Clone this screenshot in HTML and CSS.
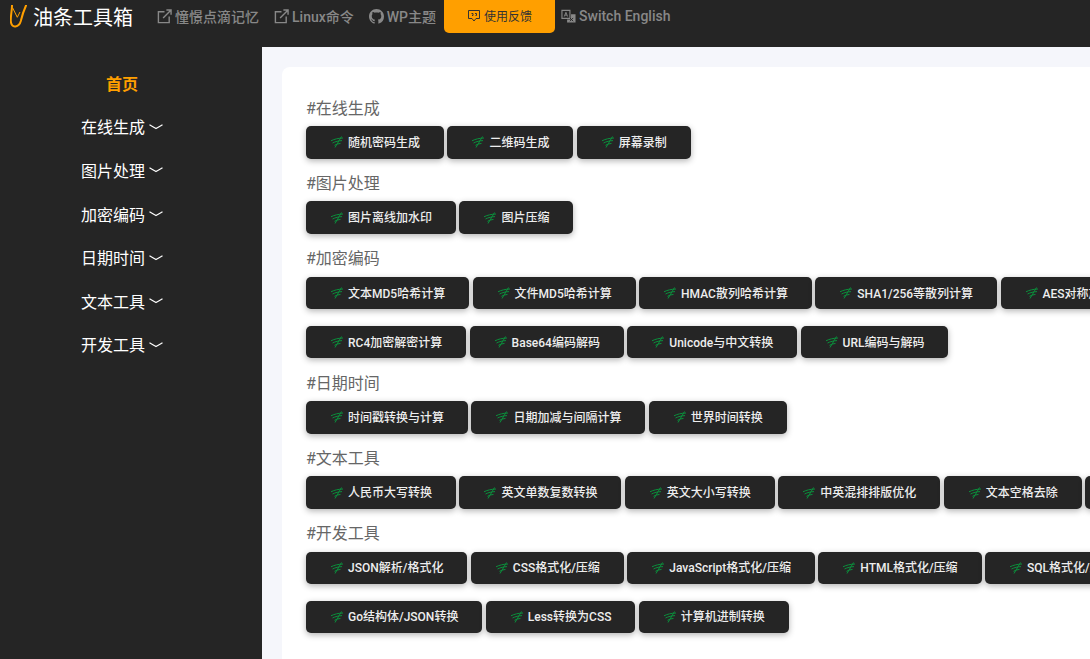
FILE: index.html
```html
<!DOCTYPE html>
<html lang="zh-CN">

<head>
  <meta charset="UTF-8">
  <title>油条工具箱</title>
  <link rel="stylesheet" href="styles.css">
</head>

<body>

  <svg class="defs" width="0" height="0">
    <symbol id="leaf" viewBox="0 0 14 12">
      <path d="M1 4.800C4.500 3 8.500 2.200 13 2M2.500 7C5.500 5.500 8.500 4.800 12 4.600M4.500 9.300C6.500 8.200 8.300 7.600 10.500 7.400M11.500 .5L5 11.500" fill="none" stroke="currentColor" stroke-width="1"/>
    </symbol>
    <symbol id="out" viewBox="0 0 16 16">
      <path d="M8 3H1.500V14.500H13V8M6.500 9.500L14.500 1.500M10 1H15V6" fill="none" stroke="currentColor" stroke-width="1.500"/>
    </symbol>
    <symbol id="chev" viewBox="0 0 14 6">
      <path d="M.5 .8C4 2.800 6 4 7 4.600C8 4 10 2.800 13.500 .8" fill="none" stroke="currentColor" stroke-width="1.200"/>
    </symbol>
  </svg>

  <header class="topbar">
    <a class="brand">
      <svg class="brand-icon" viewBox="0 0 18 24" width="18" height="24">
        <path d="M2 .5C2 6 .5 11 .8 16C1 20 3 22 5.500 21.500C8.500 21 10 19 10.800 16C12 11 14 5 16 .5" fill="none" stroke="#ff9f00" stroke-width="2" stroke-linecap="round" stroke-linejoin="round"/>
        <path d="M2.700 3L7.300 12.300L10 7" fill="none" stroke="#ff9f00" stroke-width="1"/>
      </svg>
      油条工具箱
    </a>
    <nav class="topnav">
      <a class="nav-link"><svg class="nav-icon"><use href="#out"/></svg>憧憬点滴记忆</a>
      <a class="nav-link"><svg class="nav-icon"><use href="#out"/></svg>Linux命令</a>
      <a class="nav-link">
        <svg class="nav-icon" viewBox="0 0 16 16"><path fill="currentColor" d="M8 0C3.580 0 0 3.580 0 8c0 3.540 2.290 6.530 5.470 7.590.4.070.55-.17.55-.38 0-.19-.01-.82-.01-1.490-2.010.37-2.530-.49-2.690-.94-.09-.23-.48-.94-.82-1.130-.28-.15-.68-.52-.01-.53.63-.01 1.080.58 1.230.82.720 1.210 1.870.870 2.330.660.070-.520.280-.870.510-1.070-1.780-.2-3.640-.890-3.640-3.950 0-.870.310-1.590.820-2.150-.080-.2-.360-1.020.080-2.120 0 0 .670-.210 2.200.820.640-.180 1.320-.270 2-.270s1.360.090 2 .270c1.530-1.040 2.200-.820 2.200-.820.440 1.100.160 1.920.080 2.120.510.560.820 1.270.820 2.150 0 3.070-1.870 3.750-3.650 3.950.290.250.540.730.540 1.480 0 1.070-.010 1.930-.010 2.200 0 .210.150.460.550.380A8.010 8.010 0 0 0 16 8c0-4.420-3.580-8-8-8z"/></svg>
        WP主题
      </a>
      <button class="feedback">
        <svg class="feedback-icon" viewBox="0 0 14 14"><path d="M1.500 1.500H12.500V9.500H9L7 12L5 9.500H1.500Z" fill="none" stroke="currentColor" stroke-width="1"/><path d="M4.500 4.500H6V6.500H5M8 4.500H9.500V6.500H8.500" fill="none" stroke="currentColor" stroke-width="1"/></svg>
        使用反馈
      </button>
      <a class="nav-link">
        <svg class="nav-icon" viewBox="0 0 16 16"><path d="M1 1.500H9.500V10H1Z" fill="none" stroke="currentColor" stroke-width="1.200"/><path d="M3.500 8L5.250 3.500L7 8M4.200 6.500H6.300" fill="none" stroke="currentColor" stroke-width="1"/><path fill="currentColor" d="M10.700 5.500H15.500V14.500H6.500V11.200H10.700Z"/><path d="M9.500 9.500L13 13M13 9.500L9.500 13" fill="none" stroke="#252525" stroke-width="1"/></svg>
        Switch English
      </a>
    </nav>
  </header>

  <div class="layout">
    <aside class="sidebar">
      <a class="side-item active">首页</a>
      <a class="side-item">在线生成<svg class="chev"><use href="#chev"/></svg></a>
      <a class="side-item">图片处理<svg class="chev"><use href="#chev"/></svg></a>
      <a class="side-item">加密编码<svg class="chev"><use href="#chev"/></svg></a>
      <a class="side-item">日期时间<svg class="chev"><use href="#chev"/></svg></a>
      <a class="side-item">文本工具<svg class="chev"><use href="#chev"/></svg></a>
      <a class="side-item">开发工具<svg class="chev"><use href="#chev"/></svg></a>
    </aside>

    <main class="content">
      <div class="card">
        <h3 class="group-title">#在线生成</h3>
        <div class="tools">
          <a class="tool"><svg class="tool-icon"><use href="#leaf"/></svg>随机密码生成</a>
          <a class="tool"><svg class="tool-icon"><use href="#leaf"/></svg>二维码生成</a>
          <a class="tool"><svg class="tool-icon"><use href="#leaf"/></svg>屏幕录制</a>
        </div>

        <h3 class="group-title">#图片处理</h3>
        <div class="tools">
          <a class="tool"><svg class="tool-icon"><use href="#leaf"/></svg>图片离线加水印</a>
          <a class="tool"><svg class="tool-icon"><use href="#leaf"/></svg>图片压缩</a>
        </div>

        <h3 class="group-title">#加密编码</h3>
        <div class="tools">
          <a class="tool"><svg class="tool-icon"><use href="#leaf"/></svg>文本MD5哈希计算</a>
          <a class="tool"><svg class="tool-icon"><use href="#leaf"/></svg>文件MD5哈希计算</a>
          <a class="tool"><svg class="tool-icon"><use href="#leaf"/></svg>HMAC散列哈希计算</a>
          <a class="tool"><svg class="tool-icon"><use href="#leaf"/></svg>SHA1/256等散列计算</a>
          <a class="tool"><svg class="tool-icon"><use href="#leaf"/></svg>AES对称加解密</a>
        </div>
        <div class="tools">
          <a class="tool"><svg class="tool-icon"><use href="#leaf"/></svg>RC4加密解密计算</a>
          <a class="tool"><svg class="tool-icon"><use href="#leaf"/></svg>Base64编码解码</a>
          <a class="tool"><svg class="tool-icon"><use href="#leaf"/></svg>Unicode与中文转换</a>
          <a class="tool"><svg class="tool-icon"><use href="#leaf"/></svg>URL编码与解码</a>
        </div>

        <h3 class="group-title">#日期时间</h3>
        <div class="tools">
          <a class="tool"><svg class="tool-icon"><use href="#leaf"/></svg>时间戳转换与计算</a>
          <a class="tool"><svg class="tool-icon"><use href="#leaf"/></svg>日期加减与间隔计算</a>
          <a class="tool"><svg class="tool-icon"><use href="#leaf"/></svg>世界时间转换</a>
        </div>

        <h3 class="group-title">#文本工具</h3>
        <div class="tools">
          <a class="tool"><svg class="tool-icon"><use href="#leaf"/></svg>人民币大写转换</a>
          <a class="tool"><svg class="tool-icon"><use href="#leaf"/></svg>英文单数复数转换</a>
          <a class="tool"><svg class="tool-icon"><use href="#leaf"/></svg>英文大小写转换</a>
          <a class="tool"><svg class="tool-icon"><use href="#leaf"/></svg>中英混排排版优化</a>
          <a class="tool"><svg class="tool-icon"><use href="#leaf"/></svg>文本空格去除</a>
          <a class="tool"><svg class="tool-icon"><use href="#leaf"/></svg>文本去重</a>
        </div>

        <h3 class="group-title">#开发工具</h3>
        <div class="tools">
          <a class="tool"><svg class="tool-icon"><use href="#leaf"/></svg>JSON解析/格式化</a>
          <a class="tool"><svg class="tool-icon"><use href="#leaf"/></svg>CSS格式化/压缩</a>
          <a class="tool"><svg class="tool-icon"><use href="#leaf"/></svg>JavaScript格式化/压缩</a>
          <a class="tool"><svg class="tool-icon"><use href="#leaf"/></svg>HTML格式化/压缩</a>
          <a class="tool"><svg class="tool-icon"><use href="#leaf"/></svg>SQL格式化/压缩</a>
        </div>
        <div class="tools">
          <a class="tool"><svg class="tool-icon"><use href="#leaf"/></svg>Go结构体/JSON转换</a>
          <a class="tool"><svg class="tool-icon"><use href="#leaf"/></svg>Less转换为CSS</a>
          <a class="tool"><svg class="tool-icon"><use href="#leaf"/></svg>计算机进制转换</a>
        </div>
      </div>
    </main>
  </div>

</body>
</html>
```

FILE: styles.css
```css
html, body { margin: 0; height: 100%; overflow: hidden; }
body { font-family: Roboto, "Noto Sans CJK SC", sans-serif; background: #f5f6fb; display: flex; flex-direction: column; }
.defs { position: absolute; }
a { color: inherit; text-decoration: none; }

.topbar { height: 47px; flex: none; box-sizing: border-box; padding: 0 0 14px 10px; display: flex; background: #252525; }
.brand { display: flex; align-items: center; gap: 5px; width: 147px; font-size: 20px; color: #fff; white-space: nowrap; }
.brand-icon { flex: none; }
.topnav { display: flex; align-items: center; }
.nav-link { display: flex; align-items: center; gap: 3px; margin-right: 15px; padding-bottom: 2px; font-size: 14px; font-weight: 500; color: #888; white-space: nowrap; }
.nav-icon { width: 15px; height: 15px; flex: none; margin-top: 1px; }
.feedback { align-self: stretch; width: 111px; margin: 0 6px 0 -7px; display: flex; align-items: center; justify-content: center; gap: 3px; padding: 0 0 2px; border: 0; border-radius: 0 0 5px 5px; background: #ff9f00; color: #333; font: inherit; font-size: 12px; }
.feedback-icon { width: 14px; height: 14px; margin-top: 1px; }

.layout { flex: 1; display: flex; min-height: 0; }
.sidebar { width: 262px; flex: none; box-sizing: border-box; padding: 14px 18px 0 0; background: #252525; }
.side-item { display: flex; justify-content: center; align-items: center; gap: 4px; height: 43.6px; font-size: 16px; color: #fff; }
.side-item.active { color: #ff9f00; font-weight: 700; }
.chev { width: 14px; height: 6px; flex: none; margin-top: 1px; }

.content { flex: 1; min-width: 0; overflow: hidden; padding: 20px; }
.card { width: 1200px; box-sizing: border-box; padding: 32.87px 24px; background: #fff; border-radius: 8px; }
.group-title { margin: 0 0 7.53px; font-size: 16px; line-height: 18.8px; font-weight: 400; color: #666; }
.tools { display: flex; gap: 3.4px; margin-bottom: 16.5px; }
.tool { display: flex; align-items: center; gap: 4px; height: 32.5px; box-sizing: border-box; padding: 0 24px 2px; border-radius: 5px; background: #252525; color: #eee; font-size: 12px; font-weight: 500; white-space: nowrap; box-shadow: 0 2px 6px rgba(0,0,0,.3); }
.tool-icon { width: 14px; height: 12px; flex: none; margin-top: 2px; color: #0b8f3c; }
```
